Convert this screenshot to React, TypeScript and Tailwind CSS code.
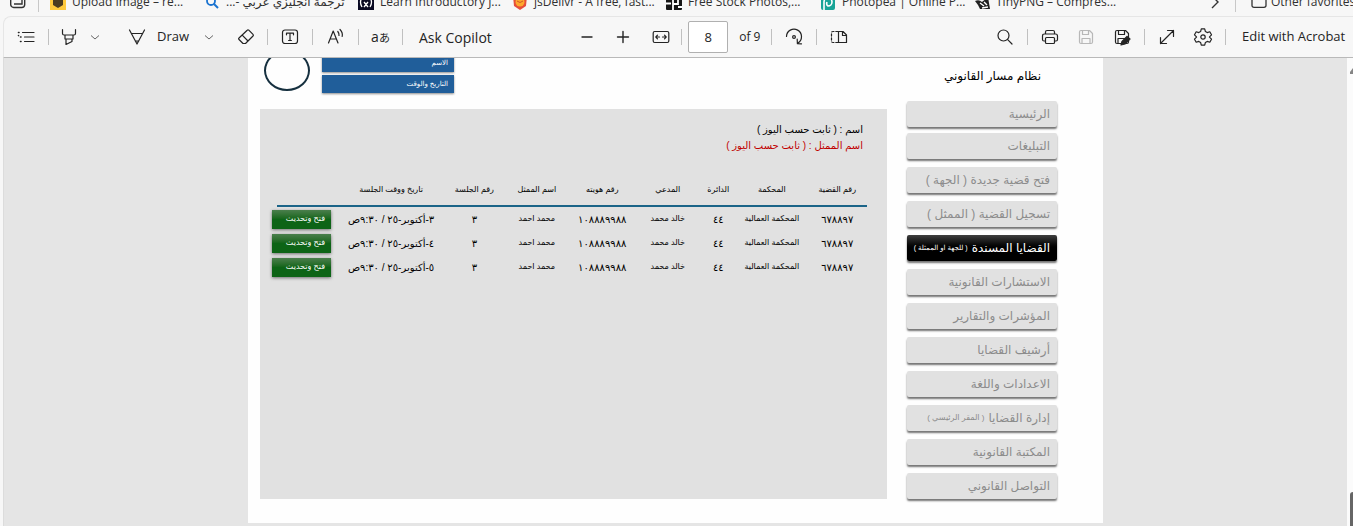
import type { ReactNode } from 'react';

const UI = "font-['Open_Sans','Noto_Sans','DejaVu_Sans',sans-serif]";
const DOC = "font-['Liberation_Sans','DejaVu_Sans',sans-serif]";

function Icon({ children, className = '' }: { children: ReactNode; className?: string }) {
  return (
    <svg
      viewBox="0 0 20 20"
      className={`h-5 w-5 shrink-0 ${className}`}
      fill="none"
      stroke="currentColor"
      strokeWidth="1.2"
      strokeLinecap="round"
      strokeLinejoin="round"
      aria-hidden="true"
    >
      {children}
    </svg>
  );
}

function Tool({ label, className, children }: { label: string; className: string; children: ReactNode }) {
  return (
    <button type="button" aria-label={label} className={`flex h-8 shrink-0 items-center justify-center ${className}`}>
      {children}
    </button>
  );
}

const Sep = () => <span className="h-4 w-px shrink-0 bg-[#c0c0c0]" />;

const Chevron = () => (
  <svg viewBox="0 0 12 12" className="h-3 w-3 shrink-0" fill="none" stroke="#666" strokeWidth="1" aria-hidden="true">
    <path d="M2 4.5 L6 8 L10 4.5" />
  </svg>
);

const Disk = () => (
  <>
    <path d="M3.5 5 a1.5 1.5 0 0 1 1.5-1.5 H13.5 L16.5 6.5 V15 a1.5 1.5 0 0 1-1.5 1.5 H5 A1.5 1.5 0 0 1 3.5 15 Z" />
    <path d="M6.5 3.5 V7.5 H12.5 V3.5 M6 16.5 V11.5 H14 V16.5" />
  </>
);

const bookmarks: { text: string; rtl?: boolean; icon: ReactNode }[] = [
  {
    text: 'Upload Image – re...',
    icon: (
      <>
        <rect width="16" height="16" fill="#fec93d" />
        <path d="M3 4 H13 V11 L8 14 L3 11 Z" fill="#4a3b20" />
      </>
    ),
  },
  {
    text: 'ترجمة انجليزي عربي -...',
    rtl: true,
    icon: (
      <>
        <circle cx="7" cy="7" r="4" fill="none" stroke="#1a73d0" strokeWidth="1.8" />
        <path d="M10 10 L14 14" stroke="#1a73d0" strokeWidth="2" />
      </>
    ),
  },
  {
    text: 'Learn Introductory J...',
    icon: (
      <>
        <rect width="16" height="16" fill="#0a0a23" />
        <path d="M4 4 Q1 8 4 13 M12 4 Q15 8 12 13 M6 13 L10 8 M10 13 L6 8" stroke="#fff" strokeWidth="1.3" fill="none" />
      </>
    ),
  },
  {
    text: 'jsDelivr - A free, fast...',
    icon: (
      <>
        <path d="M1 2 L8 0 L15 2 L14 12 L8 16 L2 12 Z" fill="#e64e3a" />
        <circle cx="8" cy="8" r="4.5" fill="#fda92d" />
        <path d="M5 7 Q8 10 11 7" stroke="#d4542a" fill="none" />
      </>
    ),
  },
  {
    text: 'Free Stock Photos,...',
    icon: (
      <>
        <rect width="16" height="16" rx="1" fill="#171717" />
        <path d="M0 9.5 H5 M7 16 V4 M7 10 H12 V4 M12 13 H16" stroke="#fff" strokeWidth="1.8" fill="none" />
      </>
    ),
  },
  {
    text: 'Photopea | Online P...',
    icon: (
      <>
        <rect x="1" width="14" height="16" rx="2" fill="#18a497" />
        <path d="M4 16 V8 A4 4 0 1 1 8 12 Q6 11 7 8" stroke="#fff" strokeWidth="1.6" fill="none" />
      </>
    ),
  },
  {
    text: 'TinyPNG – Compres...',
    icon: (
      <>
        <path d="M1 7 Q5 5 8 8 L14 3 L16 15 H6 L4 11 Z" fill="#222" />
        <path d="M6 9 L10 12 M10 8 L13 11 M8 14 L14 13" stroke="#fff" strokeWidth="1.4" />
      </>
    ),
  },
];

function BookmarksBar() {
  return (
    <nav aria-label="Favorites" className="-mt-3 flex h-7 items-center overflow-hidden text-[12px] text-[#303030]">
      <svg viewBox="0 0 16 16" className="ml-2.5 h-4 w-4 shrink-0" fill="none" stroke="#333" strokeWidth="1.4" aria-hidden="true">
        <rect x="0.7" y="1" width="14" height="12.5" rx="3" />
        <path d="M4 10 H12 V5" />
      </svg>
      <span className="ml-3 h-5 w-px shrink-0 bg-[#c8c8c8]" />
      <div className="ml-[11px] flex min-w-0 flex-1 overflow-hidden">
        {bookmarks.map((b) => (
          <a key={b.text} href="#" className="flex w-[154px] shrink-0 items-center gap-1.5">
            <svg viewBox="0 0 16 16" className="h-4 w-4 shrink-0" aria-hidden="true">
              {b.icon}
            </svg>
            <span dir={b.rtl ? 'rtl' : 'ltr'} className="whitespace-nowrap">
              {b.text}
            </span>
          </a>
        ))}
      </div>
      <button type="button" aria-label="More favorites" className="w-7 shrink-0">
        <svg viewBox="0 0 16 16" className="h-4 w-4" fill="none" stroke="#333" strokeWidth="1.4">
          <path d="M5 2 L11 8 L5 14" />
        </svg>
      </button>
      <span className="h-5 w-px shrink-0 bg-[#c8c8c8]" />
      <a href="#" className="ml-[15px] flex w-[102px] shrink-0 items-center gap-1 whitespace-nowrap">
        <svg viewBox="0 0 16 16" className="h-4 w-4 shrink-0" fill="none" stroke="#333" strokeWidth="1.3" aria-hidden="true">
          <path d="M1 3 Q1 1.5 3 1.5 H6 L8 3.5 H13 Q15 3.5 15 5 V11.5 Q15 13.3 13 13.3 H3 Q1 13.3 1 11.5 Z" />
        </svg>
        Other favorites
      </a>
    </nav>
  );
}

function Toolbar() {
  return (
    <header className="ml-[3px] flex h-[42px] items-center rounded-tl-lg border-t border-b border-l border-t-[#e6e6e6] border-b-[#b9b9b9] border-l-[#e6e6e6] text-[14px] text-[#242424]">
      <div className="flex items-center">
        <Tool label="Contents" className="w-11">
          <Icon>
            <path d="M6.5 5.5 H18 M8.5 10 H18 M8.5 14.5 H18" />
            <path d="M2.5 5.5 H3 M4.5 10 H5 M4.5 14.5 H5 M2.5 8.5 V8.6" strokeWidth="1.6" />
          </Icon>
        </Tool>
        <Sep />
        <Tool label="Highlight" className="w-10">
          <Icon>
            <path d="M3.5 2.5 V6.5 Q3.5 8 5 8 H15 Q16.5 8 16.5 6.5 V2.5 M6 8 V12 H14 V8 M7 12 V17.5 L13 14.5 V12" />
          </Icon>
        </Tool>
        <Tool label="Highlight options" className="w-3">
          <Chevron />
        </Tool>
        <button type="button" className="ml-[26px] flex h-8 w-[76px] items-center gap-2.5 text-[13px]">
          <Icon>
            <path d="M2.5 3 L10 17 L17.5 3 M4.5 6.5 H15.5 M8.3 14 H11.7" />
          </Icon>
          Draw
        </button>
        <Tool label="Draw options" className="w-3">
          <Chevron />
        </Tool>
        <Tool label="Erase" className="ml-2.5 w-[42px]">
          <Icon>
            <path d="M11.2 3.2 Q12 2.4 12.8 3.2 L17 7.4 Q17.8 8.2 17 9 L9.5 16.5 H7 L3 12.5 Q2.2 11.7 3 11 Z M6.2 8.2 L12 14" />
          </Icon>
        </Tool>
        <Sep />
        <Tool label="Add text" className="w-11">
          <Icon>
            <rect x="2.5" y="3" width="15" height="13.5" rx="2.5" />
            <path d="M6.5 7.8 V6.2 H13.5 V7.8 M10 6.2 V13.5 M8.6 13.5 H11.4" />
          </Icon>
        </Tool>
        <Sep />
        <Tool label="Read aloud" className="w-[45px]">
          <Icon>
            <path d="M2.5 16 L7.2 4 L12 16 M4.2 12 H10.2 M11.8 4.5 Q13.3 6.3 13 8.5 M14 2.5 Q17 5.5 16.2 9.5" />
          </Icon>
        </Tool>
        <Sep />
        <Tool label="Translate" className="w-[43px]">
          <span className="font-['Open_Sans','Noto_Sans_CJK_JP',sans-serif] text-[14px] leading-5">
            a<span className="text-[11px]">あ</span>
          </span>
        </Tool>
        <Sep />
        <button type="button" className="ml-4 w-[74px] text-left whitespace-nowrap">
          Ask Copilot
        </button>
      </div>

      <span className="flex-[5]" />

      <div className="flex items-center">
        <Tool label="Zoom out" className="w-9">
          <Icon>
            <path d="M5 10 H15" strokeWidth="1.4" />
          </Icon>
        </Tool>
        <Tool label="Zoom in" className="w-9">
          <Icon>
            <path d="M4.5 10 H15.5 M10 4.5 V15.5" strokeWidth="1.4" />
          </Icon>
        </Tool>
        <Tool label="Fit to width" className="w-10">
          <Icon>
            <rect x="2.2" y="4.5" width="15.6" height="11" rx="1.5" />
            <path d="M5 10 H8.5 M11.5 10 H15 M6.5 8.2 L4.8 10 L6.5 11.8 M13.5 8.2 L15.2 10 L13.5 11.8" />
          </Icon>
        </Tool>
        <Sep />
        <input
          aria-label="Page number"
          defaultValue="8"
          className="ml-1.5 h-8 w-10 rounded-xs border border-[#b0b0b0] bg-white text-center text-[13px]"
        />
        <span className="ml-[11px] w-8 text-[12px] whitespace-nowrap">of 9</span>
        <Sep />
        <Tool label="Rotate" className="w-11">
          <Icon>
            <path d="M2.5 9.5 A7.5 7.5 0 1 1 14 16 M13.2 12.2 L13.4 16.6 L17.5 16.8" />
            <circle cx="10" cy="10" r="1.4" />
          </Icon>
        </Tool>
        <Sep />
        <Tool label="Page view" className="w-11">
          <Icon>
            <path d="M9.5 4.5 H14 L17.5 8 V15.5 H9.5 Z M13.5 4.5 V8.5 H17.5" />
            <path d="M9 4.5 H4 Q2.5 4.5 2.5 6 V14 Q2.5 15.5 4 15.5 H9" strokeDasharray="2.2 1.8" />
          </Icon>
        </Tool>
      </div>

      <span className="flex-[8]" />

      <div className="flex items-center">
        <Tool label="Search" className="w-11">
          <Icon>
            <circle cx="8.5" cy="8.5" r="5.5" />
            <path d="M12.7 12.7 L17 17" />
          </Icon>
        </Tool>
        <Sep />
        <Tool label="Print" className="w-11">
          <Icon>
            <path d="M5.5 7 V5 Q5.5 3.5 7 3.5 H13 Q14.5 3.5 14.5 5 V7 M5.5 14 H4 Q2.5 14 2.5 12.5 V9 Q2.5 7 4.5 7 H15.5 Q17.5 7 17.5 9 V12.5 Q17.5 14 16 14 H14.5" />
            <rect x="5.5" y="10.5" width="9" height="6" rx="1" />
          </Icon>
        </Tool>
        <Tool label="Save" className="w-7">
          <Icon className="text-[#b8b8b8]">
            <Disk />
          </Icon>
        </Tool>
        <Tool label="Save as" className="w-11">
          <Icon>
            <Disk />
            <path d="M9 18 L10 14.5 L15 9.5 L18 12 L13 17 Z" fill="currentColor" />
          </Icon>
        </Tool>
        <Sep />
        <Tool label="Full screen" className="w-11">
          <Icon>
            <path d="M3.5 16.5 L16.5 3.5 M10.5 3.5 H16.5 V9.5 M3.5 10.5 V16.5 H9.5" />
          </Icon>
        </Tool>
        <Tool label="Settings" className="w-7">
          <Icon>
            <path d="M8.3 1.8 H11.7 L12.4 4.6 L14.2 5.6 L16.8 4.8 L18.5 7.8 L16.5 9.8 V10.2 L18.5 12.2 L16.8 15.2 L14.2 14.4 L12.4 15.4 L11.7 18.2 H8.3 L7.6 15.4 L5.8 14.4 L3.2 15.2 L1.5 12.2 L3.5 10.2 V9.8 L1.5 7.8 L3.2 4.8 L5.8 5.6 L7.6 4.6 Z" />
            <circle cx="10" cy="10" r="2.2" />
          </Icon>
        </Tool>
        <span className="w-2" />
        <Sep />
        <button type="button" className="ml-4 w-[111px] text-left text-[13px] whitespace-nowrap">
          Edit with Acrobat
        </button>
      </div>
    </header>
  );
}

const menu: { label: string; note?: string; active?: boolean }[] = [
  { label: 'الرئيسية' },
  { label: 'التبليغات' },
  { label: 'فتح قضية جديدة ( الجهة )' },
  { label: 'تسجيل القضية ( الممثل )' },
  { label: 'القضايا المسندة', note: '( للجهة او الممثلة )', active: true },
  { label: 'الاستشارات القانونية' },
  { label: 'المؤشرات والتقارير' },
  { label: 'أرشيف القضايا' },
  { label: 'الاعدادات واللغة' },
  { label: 'إدارة القضايا', note: '( المقر الرئيسي )' },
  { label: 'المكتبة القانونية' },
  { label: 'التواصل القانوني' },
];

function Sidebar() {
  return (
    <aside className="w-[150px] shrink-0">
      <h1 className="h-[43px] pr-4 text-[12px] leading-9 whitespace-nowrap text-black">نظام مسار القانوني</h1>
      <nav className="flex flex-col gap-2">
        {menu.map((m) => (
          <a
            key={m.label}
            href="#"
            className={`flex h-[26px] items-center gap-1 rounded-xs pr-[7px] text-[12px] whitespace-nowrap shadow-[0_2px_2px_rgba(0,0,0,0.55)] first:-mb-0.5 ${
              m.active ? 'bg-linear-to-b from-[#404040] to-black to-60% text-white' : 'bg-[#e1e1e1] text-[#8c8c8c]'
            }`}
          >
            {m.label}
            {m.note && <span className={m.active ? 'text-[7px]' : 'text-[8px]'}>{m.note}</span>}
          </a>
        ))}
      </nav>
    </aside>
  );
}

const columns = [
  { title: 'رقم القضية', width: 'w-[10%]' },
  { title: 'المحكمة', width: 'w-[12%]' },
  { title: 'الدائرة', width: 'w-[6%]' },
  { title: 'المدعي', width: 'w-[11%]' },
  { title: 'رقم هويته', width: 'w-[11%]' },
  { title: 'اسم الممثل', width: 'w-[11%]' },
  { title: 'رقم الجلسة', width: 'w-[10%]' },
  { title: 'تاريخ ووقت الجلسة', width: 'w-[18%]' },
];

const days = ['٣', '٤', '٥'];

function CasesTable() {
  return (
    <table className="mt-[19px] w-full table-fixed border-collapse text-center text-[8px] whitespace-nowrap text-black">
      <thead>
        <tr>
          {columns.map((c) => (
            <th key={c.title} className={`${c.width} p-0 font-normal`}>
              <div className="h-[34px] border-b-2 border-[#1b6488] leading-[34px]">{c.title}</div>
            </th>
          ))}
          <th className="w-[11%] p-0">
            <div className="ml-[5px] h-[34px] border-b-2 border-[#1b6488]" />
          </th>
        </tr>
      </thead>
      <tbody>
        {days.map((d) => (
          <tr key={d} className="h-6">
            <td className="p-0 text-[10px]">٦٧٨٨٩٧</td>
            <td className="p-0">المحكمة العمالية</td>
            <td className="p-0 text-[10px]">٤٤</td>
            <td className="p-0">خالد محمد</td>
            <td className="p-0 text-[10px]">١٠٨٨٨٩٩٨٨</td>
            <td className="p-0">محمد احمد</td>
            <td className="p-0 text-[10px]">٣</td>
            <td className="p-0 text-[10px]">{d}-أكتوبر-٢٥ / ٩:٣٠ص</td>
            <td className="p-0">
              <button
                type="button"
                className="mr-auto flex h-[19px] w-[59px] items-center bg-linear-to-b from-[#4a7f4c] to-[#0d6416] to-50% pr-1.5 text-white shadow-[0_1px_3px_rgba(0,0,0,0.5)]"
              >
                فتح وتحديث
              </button>
            </td>
          </tr>
        ))}
      </tbody>
    </table>
  );
}

const blueField =
  'h-[18px] bg-[#205e9a] pr-1.5 text-[7px] leading-[18px] text-white shadow-[0_1px_2px_rgba(0,0,0,0.45)]';

function DocumentPage() {
  return (
    <div dir="rtl" className={`${DOC} mx-auto flex w-full max-w-[855px] gap-5 overflow-hidden bg-[#fefefe] pr-[46px] pb-6 pl-3`}>
      <Sidebar />
      <section className="flex min-w-0 flex-1 flex-col">
        <div className="flex h-[51px] items-start justify-end gap-3">
          <div className="-mt-1 flex w-[132px] flex-col gap-[3px]">
            <div className={blueField}>الاسم</div>
            <div className={blueField}>التاريخ والوقت</div>
          </div>
          <div className="-mt-2 ml-1 h-[41px] w-[46px] rounded-[50%] border-2 border-[#16303f]" />
        </div>
        <div className="flex-1 bg-[#e1e1e1] pt-[13px] pr-5 pl-3">
          <div className="pr-1 text-[10px] leading-4">
            <p className="text-black">اسم : ( ثابت حسب اليوز )</p>
            <p className="text-[#c00000]">اسم الممثل : ( ثابت حسب اليوز )</p>
          </div>
          <CasesTable />
        </div>
      </section>
    </div>
  );
}

export default function App() {
  return (
    <div className={`${UI} flex h-screen flex-col overflow-hidden bg-[#f7f7f7]`}>
      <BookmarksBar />
      <Toolbar />
      <main className="ml-[3px] flex min-h-0 flex-1 border-l border-[#dcdcdc] bg-[#e5e5e5]">
        <div className="min-w-0 flex-1">
          <DocumentPage />
        </div>
        <div className="flex w-1.5 shrink-0 flex-col items-end justify-between overflow-hidden bg-[#fbfbfb]" aria-hidden="true">
          <svg viewBox="0 0 3 6" className="mt-2.5 h-1.5 w-[3px]">
            <path d="M0 6 V4 L3 0 V6 Z" fill="#858585" />
          </svg>
          <span className="h-[34px] w-[3px] rounded-tl-sm bg-[#666]" />
        </div>
      </main>
    </div>
  );
}
